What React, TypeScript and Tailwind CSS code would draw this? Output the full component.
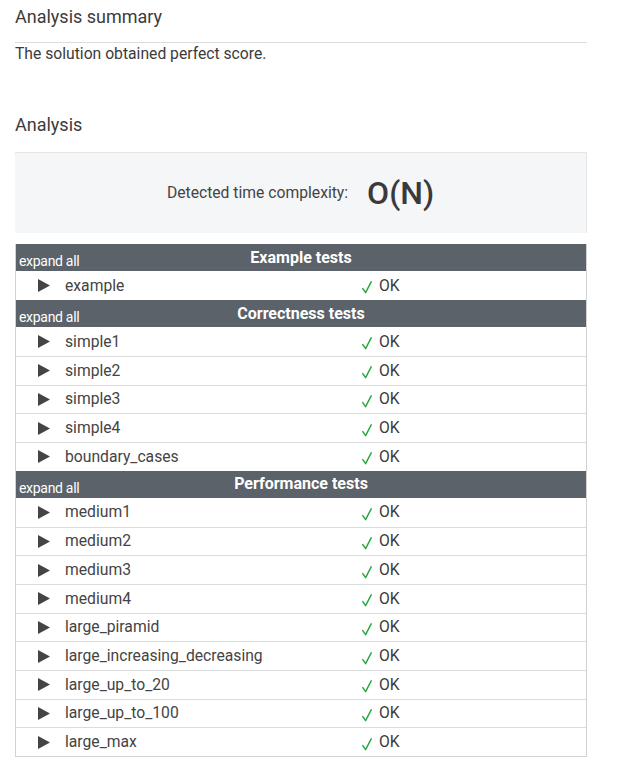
import React from "react";

type Section = { title: string; rows: string[] };

const sections: Section[] = [
  { title: "Example tests", rows: ["example"] },
  {
    title: "Correctness tests",
    rows: ["simple1", "simple2", "simple3", "simple4", "boundary_cases"],
  },
  {
    title: "Performance tests",
    rows: [
      "medium1",
      "medium2",
      "medium3",
      "medium4",
      "large_piramid",
      "large_increasing_decreasing",
      "large_up_to_20",
      "large_up_to_100",
      "large_max",
    ],
  },
];

function Triangle() {
  return (
    <svg width="12" height="13" viewBox="0 0 12 13" className="shrink-0">
      <polygon points="0,0 12,6.5 0,13" fill="#444444" />
    </svg>
  );
}

function Check() {
  return (
    <svg width="10" height="13" viewBox="0 0 10 13" className="shrink-0 mt-[4px]">
      <path d="M0.8 7.6 L3.6 11.6 L9.2 0.8" fill="none" stroke="#2aa845" strokeWidth="1.5" strokeLinecap="round" strokeLinejoin="round" />
    </svg>
  );
}

function TestRow({ name, first }: { name: string; first: boolean }) {
  return (
    <div
      className={`flex h-[28.67px] items-center ${first ? "" : "border-t border-[#dcdcdc]"}`}
    >
      <div className="flex w-[346px] items-center pl-[22px]">
        <Triangle />
        <span className="ml-[15px] text-[15.7px] leading-[20px] text-[#444444]">{name}</span>
      </div>
      <div className="flex items-center">
        <Check />
        <span className="ml-[7px] text-[15.7px] leading-[20px] text-[#3a3a3a]">OK</span>
      </div>
    </div>
  );
}

function Header({ title }: { title: string }) {
  return (
    <div className="grid h-[27.33px] grid-cols-[1fr_auto_1fr] bg-[#5b6269] text-white">
      <span className="self-end pb-[2px] pl-[3px] text-[14px] leading-[16px] tracking-[-0.3px]">
        expand all
      </span>
      <span className="self-center text-[16px] font-bold leading-[20px]">{title}</span>
      <span />
    </div>
  );
}

export default function App() {
  return (
    <div
      className="min-h-[767px] w-[636px] bg-white pl-[15px]"
      style={{ fontFamily: "Roboto, 'Liberation Sans', sans-serif" }}
    >
      <div className="w-[572px]">
        <div className="border-b border-[#dddddd] pb-[11px] pt-[3px] text-[18px] leading-[28px] text-[#3b3b3b]">
          Analysis summary
        </div>
        <div className="mt-[1px] text-[15.7px] leading-[20px] text-[#3b3b3b]">
          The solution obtained perfect score.
        </div>
        <div className="mt-[47px] text-[18px] leading-[28px] text-[#3b3b3b]">Analysis</div>
        <div className="mt-[13px] flex h-[81px] items-center justify-center gap-[19px] border-t border-r border-[#e4e5e6] bg-[#f5f6f7]">
          <span className="text-[15.7px] leading-[20px] text-[#444444]">Detected time complexity:</span>
          <span className="text-[32px] font-medium leading-[40px] text-[#3a3a3a]">O(N)</span>
        </div>
        <div className="mt-[11px] border-x border-b border-[#d2d2d2]">
          {sections.map((s) => (
            <div key={s.title}>
              <Header title={s.title} />
              {s.rows.map((r, i) => (
                <TestRow key={r} name={r} first={i === 0} />
              ))}
            </div>
          ))}
        </div>
      </div>
    </div>
  );
}
